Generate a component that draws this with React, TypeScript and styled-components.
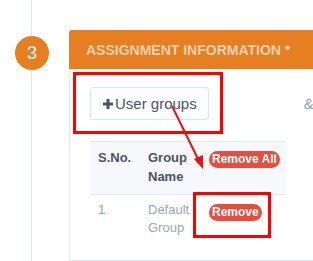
import React from "react";
import styled, { createGlobalStyle } from "styled-components";

const GlobalStyle = createGlobalStyle`
  html, body {
    margin: 0;
    padding: 0;
    background: #ffffff;
    font-family: "Liberation Sans", Arial, sans-serif;
    overflow: hidden;
  }
`;

const Page = styled.div`
  position: relative;
  display: flex;
  height: 261px;
  overflow: hidden;
`;

const Timeline = styled.div`
  width: 69px;
  flex-shrink: 0;
  background: linear-gradient(
    to right,
    transparent 31px,
    #dfe6ee 31px,
    #dfe6ee 32px,
    transparent 32px
  );
`;

const StepCircle = styled.div`
  width: 34px;
  height: 34px;
  margin: 36px 0 0 15px;
  border-radius: 50%;
  background: #e67e22;
  color: #ffffff;
  font-size: 18px;
  line-height: 34px;
  text-align: center;
`;

const Panel = styled.div`
  width: 420px;
  flex-shrink: 0;
  margin-top: 30px;
  border: 1px solid #dfe6ee;
  border-top: 0;
  border-radius: 3px 3px 0 0;
`;

const PanelHeader = styled.div`
  box-sizing: border-box;
  height: 39px;
  margin: 0 -1px;
  padding: 2px 0 0 17px;
  border-radius: 3px 3px 0 0;
  background: #e67e22;
  color: #f8d2ae;
  font-size: 14px;
  font-weight: bold;
  line-height: 37px;
  text-transform: uppercase;
`;

const PanelBody = styled.div`
  padding: 18px 0 0 20px;
`;

const Toolbar = styled.div`
  display: flex;
  align-items: center;
`;

const OutlineButton = styled.button`
  display: flex;
  align-items: center;
  height: 33px;
  padding: 0 11px 0 12px;
  border: 1px solid #dde5ee;
  border-radius: 3px;
  background: #fcfdfe;
  color: #4a5561;
  font-family: inherit;
  font-size: 15px;
`;

const PlusIcon = styled.svg`
  width: 10px;
  height: 10px;
  margin-right: 2px;
`;

const Hint = styled.span`
  margin-left: 95px;
  color: #8fa0b3;
  font-size: 15px;
`;

const Table = styled.table`
  width: 196px;
  margin-top: 21px;
  border-collapse: collapse;
  table-layout: fixed;
  font-size: 13px;
`;

const HeadRow = styled.tr`
  background: #f6f8fb;
  border-top: 1px solid #e3e9f0;
  border-bottom: 1px solid #e3e9f0;
`;

const Th = styled.th<{ $w: number }>`
  box-sizing: border-box;
  width: ${(p) => p.$w}px;
  padding: 6px 8px 8px;
  color: #4a5561;
  font-weight: bold;
  line-height: 19px;
  text-align: left;
  vertical-align: top;
`;

const Td = styled.td`
  padding: 6px 8px 5px;
  color: #98a8b8;
  line-height: 18px;
  vertical-align: top;
`;

const Badge = styled.span`
  display: inline-block;
  vertical-align: top;
  margin-top: 3px;
  height: 17px;
  padding: 0 3px;
  border-radius: 9px;
  background: #e74c3c;
  color: #ffffff;
  font-size: 12px;
  font-weight: bold;
  line-height: 17px;
  white-space: nowrap;
`;

const Callout = styled.div<{ $x: number; $y: number; $w: number; $h: number }>`
  position: absolute;
  left: ${(p) => p.$x}px;
  top: ${(p) => p.$y}px;
  width: ${(p) => p.$w}px;
  height: ${(p) => p.$h}px;
  box-sizing: border-box;
  border: 3px solid #ff0000;
  pointer-events: none;
`;

const ArrowLayer = styled.svg`
  position: absolute;
  left: 0;
  top: 0;
  width: 313px;
  height: 261px;
  pointer-events: none;
`;

const App = () => {
  return (
    <>
      <GlobalStyle />
      <Page>
        <Timeline>
          <StepCircle>3</StepCircle>
        </Timeline>
        <Panel>
          <PanelHeader>Assignment Information *</PanelHeader>
          <PanelBody>
            <Toolbar>
              <OutlineButton>
                <PlusIcon viewBox="0 0 10 10">
                  <rect x="3.5" y="0" width="3" height="10" fill="currentColor" />
                  <rect x="0" y="3.5" width="10" height="3" fill="currentColor" />
                </PlusIcon>
                User groups
              </OutlineButton>
              <Hint>&amp;</Hint>
            </Toolbar>
            <Table>
              <thead>
                <HeadRow>
                  <Th $w={50}>S.No.</Th>
                  <Th $w={61}>Group Name</Th>
                  <Th $w={85}>
                    <Badge>Remove All</Badge>
                  </Th>
                </HeadRow>
              </thead>
              <tbody>
                <tr>
                  <Td>1</Td>
                  <Td>Default Group</Td>
                  <Td>
                    <Badge>Remove</Badge>
                  </Td>
                </tr>
              </tbody>
            </Table>
          </PanelBody>
        </Panel>

        <Callout $x={73} $y={72} $w={150} $h={62} />
        <Callout $x={193} $y={192} $w={78} $h={46} />
        <ArrowLayer viewBox="0 0 313 261">
          <line x1="172" y1="106" x2="199" y2="161" stroke="#ee1111" strokeWidth="2" />
          <polygon points="203,169 194,159 203,155" fill="#ee1111" />
        </ArrowLayer>
      </Page>
    </>
  );
};

export default App;
